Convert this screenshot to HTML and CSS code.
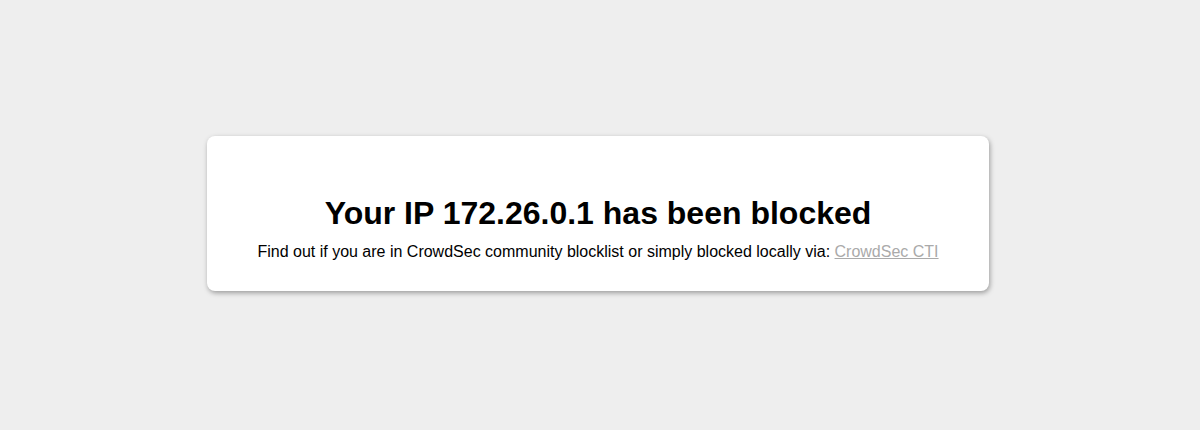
FILE: index.html
```html
<!DOCTYPE html>
<html lang="en">
<head>
<meta charset="utf-8">
<title>CrowdSec Ban</title>
<link rel="stylesheet" href="styles.css">
</head>
<body>
<div class="page">
  <div class="card">
    <h1 class="title">Your IP 172.26.0.1 has been blocked</h1>
    <p class="text">Find out if you are in CrowdSec community blocklist or simply blocked locally via: <a class="link" href="#">CrowdSec CTI</a></p>
  </div>
</div>
</body>
</html>
```
FILE: styles.css
```css
html, body {
  margin: 0;
  padding: 0;
  height: 100%;
}
body {
  background: #eeeeee;
  font-family: "Liberation Sans", Arial, sans-serif;
  color: #000;
}
.page {
  height: 100%;
  box-sizing: border-box;
  padding: 0 4px 3px 0;
  display: flex;
  align-items: center;
  justify-content: center;
}
.card {
  width: 782px;
  box-sizing: border-box;
  background: #fff;
  border-radius: 8px;
  box-shadow: 1px 2px 5px rgba(0,0,0,0.35);
  padding: 58px 20px 30px;
  text-align: center;
}
.title {
  margin: 0 0 9px;
  font-size: 32px;
  font-weight: bold;
  line-height: 1.2;
}
.text {
  margin: 0;
  font-size: 16px;
  line-height: 1.2;
}
.link {
  color: #aaaaaa;
}
```
